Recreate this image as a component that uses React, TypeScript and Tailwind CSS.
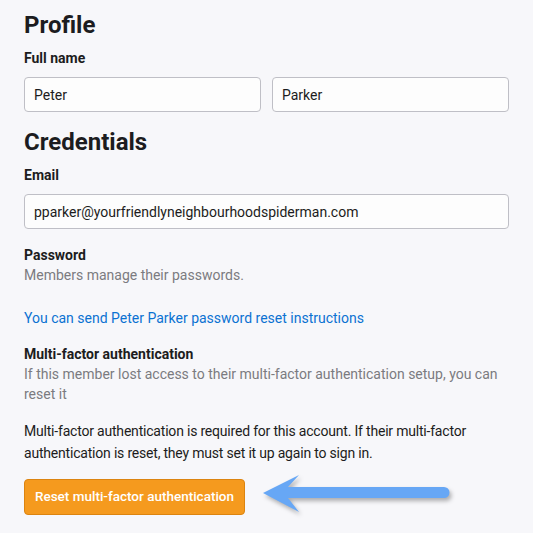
import React from 'react';

function TextInput({ value, className = '' }: { value: string; className?: string }) {
  return (
    <input
      readOnly
      value={value}
      className={`h-[35px] rounded-[4px] border border-[#bfbfc6] bg-[#fdfdfd] px-[9px] text-[14px] text-[#1c1c20] outline-none ${className}`}
    />
  );
}

function Arrow() {
  return (
    <svg width="210" height="55" viewBox="0 0 210 55" className="ml-[5px] shrink-0 drop-shadow-[2px_3px_2px_rgba(0,0,0,0.3)]">
      <path
        d="M13 24 L49 6 L38 18 L194 18 A5.5 5.5 0 0 1 194 29 L38 29 L49 43 Z"
        fill="#67a7f5"
      />
    </svg>
  );
}

export default function App() {
  return (
    <div className="min-h-[533px] w-[533px] bg-[#f7f7fa] px-6 pt-[9px] font-['Roboto',sans-serif] text-[#1c1c20]">
      {/* Profile */}
      <h1 className="text-[24px] font-bold leading-8">Profile</h1>
      <label className="mt-[7px] block text-[14px] font-bold leading-5">Full name</label>
      <div className="mt-[9px] grid grid-cols-2 gap-[11px]">
        <TextInput value="Peter" className="w-full" />
        <TextInput value="Parker" className="w-full" />
      </div>

      {/* Credentials */}
      <h2 className="mt-[14px] text-[24px] font-bold leading-8">Credentials</h2>
      <label className="mt-[7px] block text-[14px] font-bold leading-5">Email</label>
      <TextInput value="pparker@yourfriendlyneighbourhoodspiderman.com" className="mt-[9px] w-full" />

      <div className="mt-[16px] text-[14px] font-bold leading-5">Password</div>
      <p className="text-[14px] leading-5 text-[#7b7b80]">Members manage their passwords.</p>

      <a href="#" className="mt-[23px] block text-[14px] leading-5 text-[#0b72d2]">
        You can send Peter Parker password reset instructions
      </a>

      <div className="mt-[16px] text-[14px] font-bold leading-5">Multi-factor authentication</div>
      <p className="pr-2 text-[14px] leading-5 text-[#7b7b80]">
        If this member lost access to their multi-factor authentication setup, you can reset it
      </p>

      <p className="mt-[16px] pr-6 text-[14px] leading-[22px] tracking-[-0.2px] text-[#1c1c20]">
        Multi-factor authentication is required for this account. If their multi-factor authentication is reset, they
        must set it up again to sign in.
      </p>

      <div className="mt-[5px] flex items-center">
        <button className="h-[36px] w-[221px] rounded-[4px] border border-[#dc8410] bg-[#f59a1e] text-[13.5px] font-medium text-white">
          Reset multi-factor authentication
        </button>
        <Arrow />
      </div>
    </div>
  );
}
